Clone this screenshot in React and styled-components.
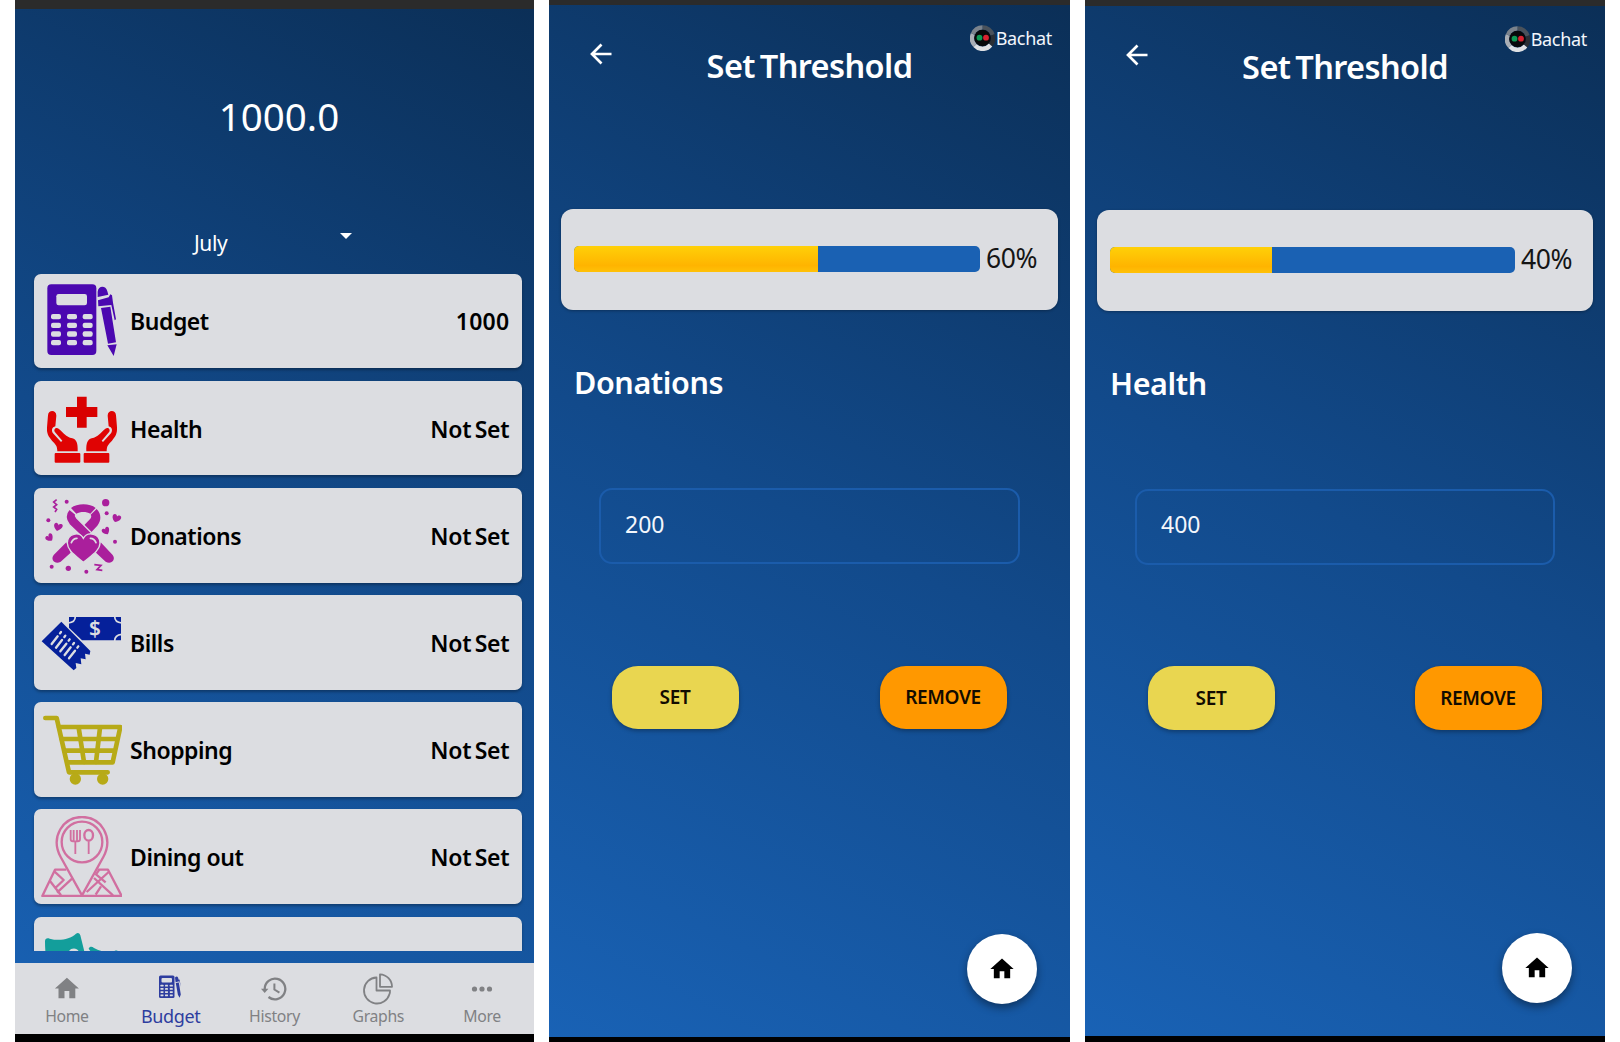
import React from 'react';
import styled, { createGlobalStyle } from 'styled-components';

const Global = createGlobalStyle`
  *{box-sizing:border-box}
  body{margin:0;background:#fff;font-family:"Noto Sans","Open Sans",sans-serif}
  #root{width:1620px;height:1042px;overflow:hidden}
  svg{display:block}
`;

const Page = styled.main`
  display: flex;
  height: 1042px;
  padding-left: 15px;
  background: #fff;
`;
const Phone = styled.section`
  flex: none;
  display: flex;
  flex-direction: column;
  width: ${(p) => p.$w}px;
  height: 1042px;
  margin-right: ${(p) => p.$gap || 0}px;
  background: #000;
`;
const StatusBar = styled.div`
  flex: none;
  height: ${(p) => p.$h}px;
  background: #2b2b2b;
`;
const Screen = styled.div`
  flex: none;
  display: flex;
  flex-direction: column;
  height: ${(p) => p.$h}px;
  background: linear-gradient(26.7deg, #1962b5 0%, #124a8b 50%, #0b2f57 100%);
`;

/* budget list */
const Total = styled.div`
  margin: 72px 0 0 9px;
  height: 70px;
  line-height: 70px;
  text-align: center;
  font-size: 38.5px;
  font-weight: 400;
  color: #fff;
`;
const MonthPicker = styled.div`
  display: flex;
  align-items: flex-start;
  justify-content: space-between;
  width: 158px;
  height: 60px;
  margin: 62.5px 0 0 179px;
  color: #fff;
`;
const Month = styled.span`
  margin-top: 14px;
  font-size: 21px;
  line-height: 30px;
  letter-spacing: -0.4px;
`;
const Caret = styled.i`
  margin-top: 19.5px;
  border: 6px solid transparent;
  border-top-color: #fff;
  border-bottom: 0;
`;
const List = styled.div`
  flex: none;
  display: flex;
  flex-direction: column;
  gap: 12.4px;
  height: 677.5px;
  padding: 0 12px 0 19px;
  overflow: hidden;
`;
const Item = styled.div`
  flex: none;
  display: flex;
  align-items: center;
  height: 94.8px;
  padding: 0 12.5px 0 7px;
  border-radius: 7px;
  background: #dcdde1;
  box-shadow: 0 2px 3px rgba(0, 0, 0, 0.3);
  font-size: 23px;
  font-weight: 600;
  color: #000;
`;
const ItemIcon = styled.svg`
  flex: none;
  width: 81px;
  height: 81px;
`;
const ItemName = styled.span`
  flex: 1;
  margin-left: 8px;
  padding-top: 1px;
  letter-spacing: -0.45px;
`;
const ItemValue = styled.span`
  padding-top: 1px;
  letter-spacing: ${(p) => (p.$numeric ? 0.3 : -0.2)}px;
  word-spacing: -2.5px;
`;
const Nav = styled.nav`
  flex: none;
  display: grid;
  grid-template-columns: repeat(5, 1fr);
  height: 71px;
  margin-top: 12px;
  background: #dcdde1;
`;
const Tab = styled.div`
  display: flex;
  flex-direction: column;
  align-items: center;
  color: ${(p) => (p.$active ? '#2e3d9f' : '#808184')};
  font-size: ${(p) => (p.$active ? 18 : 15.8)}px;
  letter-spacing: -0.35px;
`;
const TabIcon = styled.svg`
  width: 34px;
  height: 34px;
  margin-top: 8.5px;
`;
const TabLabel = styled.span`
  margin-top: -2px;
  line-height: 24px;
`;

/* threshold screen */
const Header = styled.header`
  flex: none;
  display: grid;
  grid-template-columns: 156px 1fr 156px;
  height: ${(p) => p.$h}px;
`;
const Back = styled.svg`
  width: 24px;
  height: 24px;
  margin: 36.5px 0 0 40px;
`;
const Title = styled.h1`
  margin: 38px 0 0;
  height: 46px;
  line-height: 46px;
  text-align: center;
  white-space: nowrap;
  font-size: 32.5px;
  font-weight: 600;
  letter-spacing: -0.6px;
  word-spacing: -3px;
  color: #fff;
`;
const Brand = styled.div`
  display: flex;
  align-items: center;
  justify-content: flex-end;
  height: 26px;
  margin: 19.5px 18px 0 0;
  font-size: 18px;
  letter-spacing: -0.3px;
  color: #f3f7fc;
`;
const BrandMark = styled.svg`
  width: 25px;
  height: 26px;
  margin-right: 1px;
`;
const MeterCard = styled.div`
  flex: none;
  display: flex;
  align-items: center;
  height: 101.5px;
  margin: 0 12px;
  padding: 0 0 0 13px;
  border-radius: 12px;
  background: #dcdde1;
  box-shadow: 0 1px 3px rgba(0, 0, 0, 0.3);
`;
const Meter = styled.div`
  flex: none;
  width: ${(p) => p.$w}px;
  height: 26px;
  border-radius: 5px;
  overflow: hidden;
  background: #1a61b3;
`;
const MeterFill = styled.div`
  height: 100%;
  background: linear-gradient(#ffd008, #ffb400 75%, #ffc107);
`;
const Percent = styled.span`
  margin-left: 6px;
  padding-bottom: 2px;
  font-size: 26.5px;
  letter-spacing: -0.4px;
  color: #151515;
`;
const Category = styled.h2`
  flex: none;
  margin: 50px 0 0 25px;
  height: 44px;
  line-height: 44px;
  font-size: 30.5px;
  font-weight: 600;
  letter-spacing: -0.4px;
  color: #fff;
`;
const Field = styled.div`
  flex: none;
  display: flex;
  align-items: center;
  height: 76px;
  margin: ${(p) => p.$mt}px 50.5px 0 50px;
  padding: 0 0 5px 24px;
  border: 2px solid #1b5cab;
  border-radius: 13px;
  font-size: 23px;
  color: #f3f7fc;
`;
const Actions = styled.div`
  flex: none;
  display: flex;
  justify-content: space-between;
  margin: 101.5px 63.5px 0 62.5px;
`;
const Pill = styled.button`
  width: 127px;
  height: 63.5px;
  padding: 0;
  border: 0;
  border-radius: 26px;
  background: ${(p) => p.$bg};
  box-shadow: 0 2px 4px rgba(0, 0, 0, 0.3);
  font: 600 19px 'Noto Sans', 'Open Sans', sans-serif;
  letter-spacing: -0.35px;
  color: #120c00;
`;
const Fab = styled.div`
  flex: none;
  display: grid;
  place-items: center;
  align-self: flex-end;
  width: 70px;
  height: 70px;
  margin: auto 33px ${(p) => p.$mb}px 0;
  border-radius: 50%;
  background: #fff;
  box-shadow: 0 4px 8px rgba(0, 0, 0, 0.4);
`;

const HOME = 'M10 20v-6h4v6h5v-8h3L12 3 2 12h3v8z';

const calcKeys = (xs, ys, w, h, r) =>
  ys.flatMap((y) => xs.map((x) => <rect key={`${x}-${y}`} x={x} y={y} width={w} height={h} rx={r} />));

const BudgetIcon = () => (
  <ItemIcon viewBox="63 60 243 243" fill="#4b08b0">
    <rect x="82" y="73" width="147" height="212" rx="12" />
    <g fill="#dcdde1">
      <rect x="109" y="102" width="92" height="34" rx="7" />
      {calcKeys([93, 141, 188], [162, 188, 214, 240], 30, 16, 6)}
    </g>
    <path d="M233 111V95c2-19 25-19 29-1l3 10zM234 121l32-9 5-9 5 3 3 22 9 50-4 3-10-46-39 4zM243 144l28-4 17 107-24 4zM262 256l28-3-9 35z" />
  </ItemIcon>
);
const HealthIcon = () => (
  <ItemIcon viewBox="63 381 243 243" fill="#e00303">
    <path d="M171 407h29v31h32v30h-32v32h-29v-32h-33v-30h33z" fill="#d90000" />
    {[false, true].map((flip) => (
      <g key={String(flip)} transform={flip ? 'translate(372 0) scale(-1 1)' : undefined}>
        <path d="M84 463c1-17 25-17 25 1l-3 32c-10 2-13 13-7 21l24 26 4-4-23-27c-4-8 4-15 12-9 15 12 21 24 41 29 12 4 17 13 16 39h-61c0-18-6-21-16-32-11-13-16-21-15-40z" />
        <rect x="104" y="576" width="77" height="29" rx="3" />
      </g>
    ))}
  </ItemIcon>
);
const MiniHeart = ({ t }) => <path transform={t} d="M0 11C-16 2-13-10-6-10c4 0 6 3 6 6 0-3 3-6 7-6 7 0 8 12-7 21z" />;
const DonationsIcon = () => (
  <ItemIcon viewBox="63 42 243 243" fill="#aa1f9c">
    <path d="M153 81c18-15 57-15 74 0l-16 17c-11-7-31-7-42 0z" />
    <path d="M230 84c15 15 14 36 2 50l-34 36-22-20 35-37c3-4 4-8 1-12z" />
    <path d="M148 84c-13 15-12 32 0 47l45 43 22-18-45-45c-4-4-5-7-3-11z" stroke="#dcdde1" strokeWidth="4" />
    <path d="M139 184l13 31-30 27c-16 10-32-6-21-20zM242 184l-14 31 29 27c16 10 32-6 21-20z" />
    <path d="M190 244c-24-21-48-36-48-58 0-28 36-37 48-14 13-23 50-14 50 14 0 22-25 37-50 58z" stroke="#dcdde1" strokeWidth="4" />
    <path d="M154 185q5-13 17-13M211 172q12 0 17 13" fill="none" stroke="#dcdde1" strokeWidth="5" strokeLinecap="round" />
    {[[140, 62, 6], [257, 65, 11], [260, 97, 6], [85, 118, 6], [285, 182, 6], [95, 257, 6], [145, 262, 8], [199, 272, 6]].map(([x, y, r]) => (
      <circle key={`${x}-${y}`} cx={x} cy={y} r={r} />
    ))}
    <MiniHeart t="translate(114 138) rotate(15) scale(1.1)" />
    <MiniHeart t="translate(289 112) rotate(20) scale(1.1)" />
    <MiniHeart t="translate(258 150) rotate(-30)" />
    <MiniHeart t="translate(89 170) rotate(-40)" />
    <path d="M110 56l-9 7 9 8-9 7 9 7-5 8" fill="none" stroke="#aa1f9c" strokeWidth="5" />
    <path d="M223 251l20 2-12 13 16 2" fill="none" stroke="#aa1f9c" strokeWidth="5" />
  </ItemIcon>
);
const BILL_LINES = [[95, 491], [108, 502], [121, 513], [134, 524], [147, 534]];
const BillsIcon = () => (
  <ItemIcon viewBox="63 365 243 243" fill="#05209a">
    <path d="M147 410h156v70H186l-39-38z" />
    <g fill="none" stroke="#dcdde1" strokeWidth="5">
      <path d="M166 408c0 12-7 19-21 20M284 408c0 12 7 19 21 20M284 482c0-12 7-19 21-20" />
    </g>
    <text x="225" y="466" textAnchor="middle" fontFamily="Noto Sans" fontSize="62" fontWeight="600" fill="#dcdde1">$</text>
    <path d="M124 424l87 88-2 11-14-3 2 17-15-3 2 18-17-4 2 15-8 7-96-87z" />
    <g stroke="#dcdde1" strokeWidth="7" strokeLinecap="round">
      {BILL_LINES.map(([x, y]) => (
        <path key={x} d={`M${x} ${y}l18-23M${x + 25} ${y - 32}l3-4`} />
      ))}
    </g>
  </ItemIcon>
);
const ShoppingIcon = () => (
  <ItemIcon viewBox="63 40 243 243" fill="none" stroke="#b7aa17" strokeWidth="14" strokeLinecap="round" strokeLinejoin="round">
    <path d="M76 67h34l37 163h116" />
    <path d="M117 94h184l-23 106H142M125 130h166M133 165h150" />
    <path d="M176 96l16 103M240 96l-12 103" />
    <circle cx="166" cy="250" r="17" fill="#b7aa17" stroke="none" />
    <circle cx="248" cy="250" r="17" fill="#b7aa17" stroke="none" />
  </ItemIcon>
);
const DiningIcon = () => (
  <ItemIcon viewBox="63 360 243 243" fill="none" stroke="#d16fa0" strokeWidth="7" strokeLinejoin="round">
    <path d="M186 598l-64-115c-32-60 7-120 64-120s96 60 64 120z" />
    <circle cx="186" cy="438" r="61" />
    <path d="M139 521h-34l-38 79h238l-41-79h-31" />
    <path d="M103 526l28 26-25 24M90 555l33 43M156 548l-45 42M238 521l-10 14 29 24M222 546l57 52M266 528l-66 60M243 571l-16 25" />
    <path d="M152 402v28q0 6 7 6h14q7 0 7-6v-28M161 402v32M171 402v32M166 436v38M206 436v38" strokeWidth="5.5" />
    <ellipse cx="206" cy="418" rx="13" ry="16" />
  </ItemIcon>
);
const MasksIcon = () => (
  <ItemIcon viewBox="63 683 243 243" fill="#139e9b">
    <path d="M75 735c0-8 6-11 14-8 30 8 60 2 79-15 6-4 10-2 13 5l14 56v90H110c-24-30-35-70-35-128z" />
    <path d="M146 768c2-15 28-15 30-2l-5 4h-22z" fill="#dcdde1" />
    <path d="M206 757c3-7 10-7 16-2 20 12 45 14 63 8 6-1 11 1 12 6v80h-80v-76z" />
  </ItemIcon>
);

const ITEMS = [
  { name: 'Budget', value: '1000', Icon: BudgetIcon },
  { name: 'Health', value: 'Not Set', Icon: HealthIcon },
  { name: 'Donations', value: 'Not Set', Icon: DonationsIcon },
  { name: 'Bills', value: 'Not Set', Icon: BillsIcon },
  { name: 'Shopping', value: 'Not Set', Icon: ShoppingIcon },
  { name: 'Dining out', value: 'Not Set', Icon: DiningIcon },
  { name: '', value: '', Icon: MasksIcon },
];

const TABS = [
  { label: 'Home', icon: <path d={HOME} transform="translate(2.5 2.2) scale(1.2)" fill="currentColor" /> },
  {
    label: 'Budget',
    active: true,
    icon: (
      <g fill="currentColor">
        <rect x="5" y="3.5" width="15.5" height="22.5" rx="1.5" />
        <g fill="#dcdde1">
          <rect x="7.5" y="6" width="10.5" height="4.5" rx="1" />
          {calcKeys([6.5, 11, 15.8], [12.8, 16, 19.2, 22.4], 3, 1.8, 0.4)}
        </g>
        <path d="M21 5.5q2-2 3 0l.7 2.3.8-.4 1.5 7.5-1-3.5-.7-2.2-3.7 1zM21.8 11l3-.6 2 12-1.2 3.4-1.7-3z" />
      </g>
    ),
  },
  {
    label: 'History',
    icon: (
      <g fill="none" stroke="currentColor" strokeWidth="2.3">
        <path d="M7.7 18.5V17A10.3 10.3 0 1 1 11.5 25" />
        <path d="M17.4 11.5v6l5 3.2" strokeWidth="2" />
        <path d="M4 16.7h7.4l-3.7 4.2z" fill="currentColor" stroke="none" />
      </g>
    ),
  },
  {
    label: 'Graphs',
    icon: (
      <g fill="none" stroke="currentColor" strokeWidth="1.8" strokeLinejoin="round">
        <path d="M15.5 5.5A13 13 0 1 0 28.5 22q.6-1.5.5-3.5H15.5z" />
        <path d="M19 2.3A12.5 12.5 0 0 1 31 14.8H19z" />
      </g>
    ),
  },
  {
    label: 'More',
    icon: (
      <g fill="currentColor">
        <circle cx="9.5" cy="17" r="2.6" />
        <circle cx="17" cy="17" r="2.6" />
        <circle cx="24.5" cy="17" r="2.6" />
      </g>
    ),
  },
];

const Logo = () => (
  <BrandMark viewBox="0 0 25 26">
    <g fill="none" strokeWidth="4.5">
      <path d="M12.5 2.5A10.3 10.5 0 0 1 22.5 10" stroke="#4a525b" />
      <path d="M22.5 10A10.3 10.5 0 0 1 20.5 20" stroke="#2a2e34" />
      <path d="M20.5 20A10.3 10.5 0 0 1 5 20.5" stroke="#dfe1e4" />
      <path d="M5 20.5A10.3 10.5 0 0 1 3 9" stroke="#a9aeb5" />
      <path d="M3 9A10.3 10.5 0 0 1 12.5 2.5" stroke="#7b838c" />
    </g>
    <circle cx="12.5" cy="13" r="8.3" fill="#07080a" />
    <circle cx="9.5" cy="12.7" r="2.9" fill="#0d9a55" />
    <circle cx="16" cy="12.7" r="2.9" fill="#d8222f" />
  </BrandMark>
);

function Threshold({ width, gap, top, body, headerH, percent, meterW, category, amount, fieldTop, fabBottom }) {
  return (
    <Phone $w={width} $gap={gap}>
      <StatusBar $h={top} />
      <Screen $h={body}>
        <Header $h={headerH}>
          <Back viewBox="0 0 24 24" fill="none" stroke="#fff" strokeWidth="2.7">
            <path d="M22.5 12H3.5M12.5 2.5L3 12l9.5 9.5" />
          </Back>
          <Title>Set Threshold</Title>
          <Brand>
            <Logo />
            Bachat
          </Brand>
        </Header>
        <MeterCard>
          <Meter $w={meterW}>
            <MeterFill style={{ width: `${percent}%` }} />
          </Meter>
          <Percent>{percent}%</Percent>
        </MeterCard>
        <Category>{category}</Category>
        <Field $mt={fieldTop}>{amount}</Field>
        <Actions>
          <Pill $bg="#e9d650">SET</Pill>
          <Pill $bg="#ff9800">REMOVE</Pill>
        </Actions>
        <Fab $mb={fabBottom}>
          <svg width="28" height="28" viewBox="0 0 24 24">
            <path d={HOME} />
          </svg>
        </Fab>
      </Screen>
    </Phone>
  );
}

export default function App() {
  return (
    <Page>
      <Global />
      <Phone $w={519} $gap={15}>
        <StatusBar $h={9} />
        <Screen $h={1025}>
          <Total>1000.0</Total>
          <MonthPicker>
            <Month>July</Month>
            <Caret />
          </MonthPicker>
          <List>
            {ITEMS.map(({ name, value, Icon }, i) => (
              <Item key={i}>
                <Icon />
                <ItemName>{name}</ItemName>
                <ItemValue $numeric={value === '1000'}>{value}</ItemValue>
              </Item>
            ))}
          </List>
          <Nav>
            {TABS.map((t) => (
              <Tab key={t.label} $active={t.active}>
                <TabIcon viewBox="0 0 34 34">{t.icon}</TabIcon>
                <TabLabel>{t.label}</TabLabel>
              </Tab>
            ))}
          </Nav>
        </Screen>
      </Phone>
      <Threshold width={521} gap={15} top={5} body={1031.5} headerH={203.5} percent={60} meterW={406} category="Donations" amount="200" fieldTop={84} fabBottom={33} />
      <Threshold width={520} top={6} body={1029.5} headerH={203.5} percent={40} meterW={405} category="Health" amount="400" fieldTop={83.5} fabBottom={33} />
    </Page>
  );
}
